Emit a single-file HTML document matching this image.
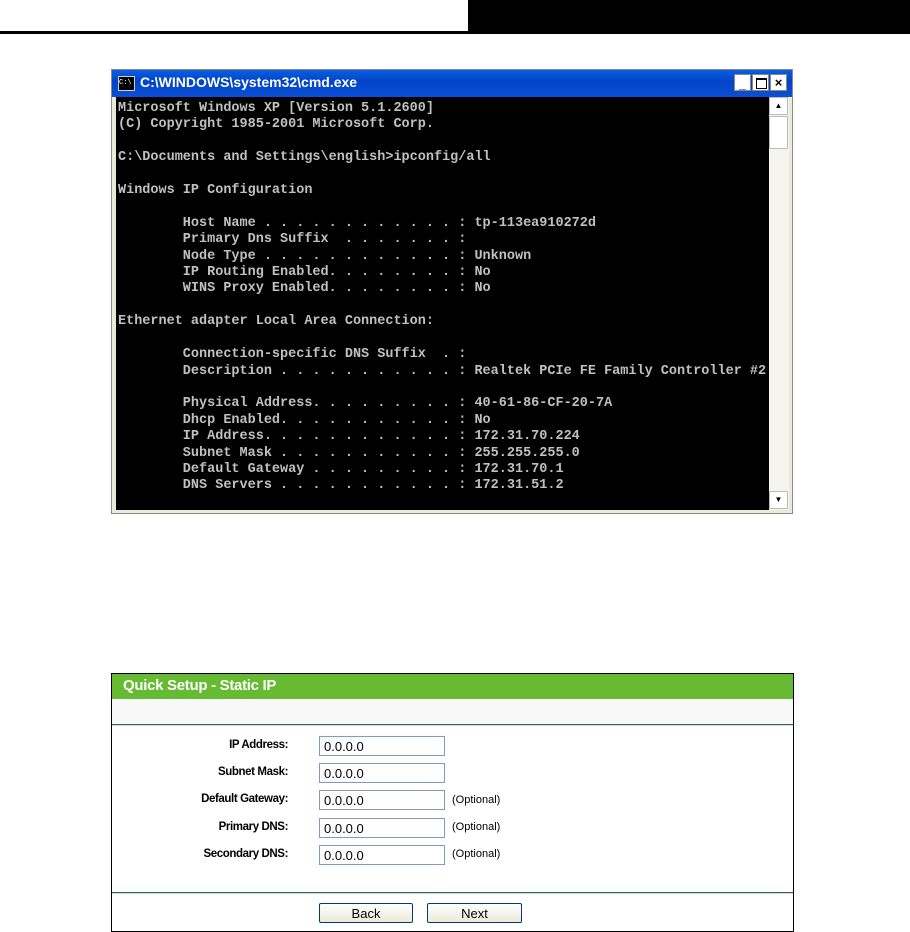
<!DOCTYPE html>
<html><head><style>
body{margin:0;width:910px;height:932px;background:#fff;position:relative;overflow:hidden;font-family:"Liberation Sans",sans-serif}
.a{position:absolute}
.con{font-family:"Liberation Mono",monospace;font-weight:bold;font-size:13.5px;color:#c0c0c0;white-space:pre;line-height:16.4px}
.lbl{position:absolute;right:622px;font-size:11.5px;font-weight:bold;color:#000;letter-spacing:-0.4px}
.inp{position:absolute;left:319px;width:126px;height:20px;border:1px solid #7f9db9;background:#fff;font-size:13px;line-height:20px;padding-left:4px;box-sizing:border-box}
.opt{position:absolute;left:452px;font-size:11px;color:#000}
.btn{position:absolute;top:903px;height:20px;border:1px solid #003c74;border-radius:2px;background:linear-gradient(#fff,#ece9d8);font-size:13px;text-align:center;line-height:20px;box-sizing:border-box}
</style></head><body>
<div class="a" style="left:0;top:0;width:468px;height:31px;background:#fff"></div>
<div class="a" style="left:468px;top:0;width:442px;height:33px;background:#000"></div>
<div class="a" style="left:0;top:31px;width:910px;height:3px;background:#000"></div>

<div class="a" style="left:111px;top:69px;width:682px;height:445px;background:#ece9d8;border:1px solid #888;box-sizing:border-box"></div>
<div class="a" style="left:112px;top:70px;width:680px;height:27px;background:linear-gradient(#0a5fe0,#0244c8 40%,#0a4fd6);"></div>
<div class="a" style="left:118px;top:76px;width:15px;height:13px;background:#000;border:1px solid #ccc;font-size:7px;color:#fff;line-height:12px;font-family:'Liberation Mono',monospace">C:\</div>
<div class="a" style="left:140px;top:74px;color:#fff;font-weight:bold;font-size:14px">C:\WINDOWS\system32\cmd.exe</div>
<div class="a" style="left:734px;top:74px;width:17px;height:17px;background:#fff;border:1px solid #888;box-sizing:border-box;font-size:12px;font-weight:bold;text-align:center;line-height:18px">_</div>
<div class="a" style="left:752px;top:74px;width:17px;height:17px;background:#fff;border:1px solid #888;box-sizing:border-box"><div style="margin:3px;width:9px;height:8px;border:1px solid #000;border-top-width:2px"></div></div>
<div class="a" style="left:770px;top:74px;width:17px;height:17px;background:#fff;border:1px solid #888;box-sizing:border-box;font-size:13px;font-weight:bold;text-align:center;line-height:15px">×</div>
<div class="a" style="left:116px;top:97px;width:653px;height:413px;background:#000"></div>
<div class="a" style="left:769px;top:97px;width:20px;height:413px;background:#f4f3ee"></div>
<div class="a" style="left:769px;top:97px;width:19px;height:18px;background:#fff;border:1px solid #bbb;box-sizing:border-box;font-size:8px;text-align:center;line-height:16px">▲</div>
<div class="a" style="left:769px;top:116px;width:19px;height:33px;background:#fff;border:1px solid #bbb;box-sizing:border-box"></div>
<div class="a" style="left:769px;top:491px;width:19px;height:18px;background:#fff;border:1px solid #bbb;box-sizing:border-box;font-size:8px;text-align:center;line-height:16px">▼</div>
<div class="a con" style="left:118px;top:101px">Microsoft Windows XP [Version 5.1.2600]
(C) Copyright 1985-2001 Microsoft Corp.

C:\Documents and Settings\english>ipconfig/all

Windows IP Configuration

        Host Name . . . . . . . . . . . . : tp-113ea910272d
        Primary Dns Suffix  . . . . . . . :
        Node Type . . . . . . . . . . . . : Unknown
        IP Routing Enabled. . . . . . . . : No
        WINS Proxy Enabled. . . . . . . . : No

Ethernet adapter Local Area Connection:

        Connection-specific DNS Suffix  . :
        Description . . . . . . . . . . . : Realtek PCIe FE Family Controller #2

        Physical Address. . . . . . . . . : 40-61-86-CF-20-7A
        Dhcp Enabled. . . . . . . . . . . : No
        IP Address. . . . . . . . . . . . : 172.31.70.224
        Subnet Mask . . . . . . . . . . . : 255.255.255.0
        Default Gateway . . . . . . . . . : 172.31.70.1
        DNS Servers . . . . . . . . . . . : 172.31.51.2</div>

<div class="a" style="left:111px;top:673px;width:683px;height:259px;border:1px solid #000;box-sizing:border-box;background:#fff"></div>
<div class="a" style="left:112px;top:674px;width:681px;height:25px;background:#66bb33"></div>
<div class="a" style="left:123px;top:677px;color:#fff;font-weight:bold;font-size:15px;letter-spacing:-0.3px">Quick Setup - Static IP</div>
<div class="a" style="left:112px;top:699px;width:681px;height:25px;background:#f8f8f8"></div>
<div class="a" style="left:112px;top:724px;width:681px;height:1px;background:#336633"></div>
<div class="a" style="left:112px;top:725px;width:681px;height:1px;background:#cde"></div>
<div class="lbl" style="top:739px">IP Address:</div><div class="inp" style="top:736px">0.0.0.0</div>
<div class="lbl" style="top:766px">Subnet Mask:</div><div class="inp" style="top:763px">0.0.0.0</div>
<div class="lbl" style="top:793px">Default Gateway:</div><div class="inp" style="top:790px">0.0.0.0</div><div class="opt" style="top:794px">(Optional)</div>
<div class="lbl" style="top:821px">Primary DNS:</div><div class="inp" style="top:818px">0.0.0.0</div><div class="opt" style="top:821px">(Optional)</div>
<div class="lbl" style="top:848px">Secondary DNS:</div><div class="inp" style="top:845px">0.0.0.0</div><div class="opt" style="top:848px">(Optional)</div>
<div class="a" style="left:112px;top:892px;width:681px;height:1px;background:#336633"></div>
<div class="a" style="left:112px;top:893px;width:681px;height:1px;background:#cde"></div>
<div class="btn" style="left:319px;width:94px">Back</div>
<div class="btn" style="left:427px;width:95px">Next</div>
</body></html>
